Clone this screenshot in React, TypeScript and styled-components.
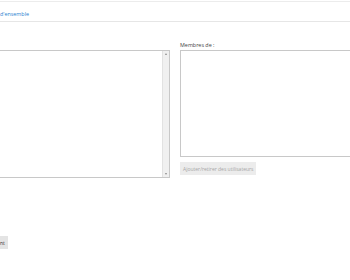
import React from "react";
import styled, {createGlobalStyle} from "styled-components";

const GlobalStyle = createGlobalStyle`
  html, body {
    margin: 0;
    padding: 0;
    background: #ffffff;
    font-family: "Open Sans", "Noto Sans", sans-serif;
    overflow: hidden;
  }
`

const Page = styled.div`
  width: 350px;
  height: 280px;
  overflow: hidden;
`

const TopBar = styled.div`
  height: 1px;
  border-bottom: 1px solid #ececec;
`

const Breadcrumb = styled.div`
  height: 20px;
  border-bottom: 1px solid #e6e6e6;
  display: flex;
  align-items: center;
  padding-top: 5px;
  box-sizing: border-box;
  margin-left: -11px;
`

const Link = styled.a`
  color: #2a7fd0;
  font-size: 5.4px;
  text-decoration: none;
`

const Columns = styled.div`
  display: grid;
  grid-template-columns: 190px 190px;
  column-gap: 10px;
  margin-left: -20px;
  padding-top: 20px;
`

const Column = styled.div`
  display: flex;
  flex-direction: column;
`

const Label = styled.div`
  font-size: 5.4px;
  color: #444444;
  height: 8px;
  line-height: 7px;
`

const ListBox = styled.div<{ $height: number }>`
  height: ${p => p.$height}px;
  border: 1px solid #c8c8c8;
  box-sizing: border-box;
  display: flex;
  justify-content: flex-end;
  background: #ffffff;
`

const ScrollBar = styled.div`
  width: 6px;
  background: #f0f0f0;
  border-left: 1px solid #e2e2e2;
  display: flex;
  flex-direction: column;
  justify-content: space-between;
  align-items: center;
  padding: 2px 0;
`

const Arrow = styled.div<{ $down?: boolean }>`
  width: 0;
  height: 0;
  border-left: 1.5px solid transparent;
  border-right: 1.5px solid transparent;
  ${p => p.$down
    ? 'border-top: 2px solid #8a8a8a;'
    : 'border-bottom: 2px solid #8a8a8a;'}
`

const Button = styled.button<{ $disabled?: boolean }>`
  align-self: flex-start;
  margin-top: 5px;
  height: 13px;
  padding: 0 3px;
  border: none;
  background: ${p => p.$disabled ? '#ececec' : '#e4e4e4'};
  color: ${p => p.$disabled ? '#a6a6a6' : '#333333'};
  font-family: "Open Sans", "Noto Sans", sans-serif;
  font-size: 5px;
  white-space: nowrap;
`

const Footer = styled.div`
  padding-top: 53px;
  margin-left: -22px;
  display: flex;
`

function App() {
    return (
        <Page>
            <GlobalStyle/>
            <TopBar/>
            <Breadcrumb>
                <Link href="#">Vue d'ensemble</Link>
            </Breadcrumb>
            <Columns>
                <Column>
                    <Label>&nbsp;</Label>
                    <ListBox $height={128}>
                        <ScrollBar>
                            <Arrow/>
                            <Arrow $down/>
                        </ScrollBar>
                    </ListBox>
                </Column>
                <Column>
                    <Label>Membres de :</Label>
                    <ListBox $height={107}/>
                    <Button $disabled>Ajouter/retirer des utilisateurs</Button>
                </Column>
            </Columns>
            <Footer>
                <Button>Précédent</Button>
            </Footer>
        </Page>
    );
}

export default App
